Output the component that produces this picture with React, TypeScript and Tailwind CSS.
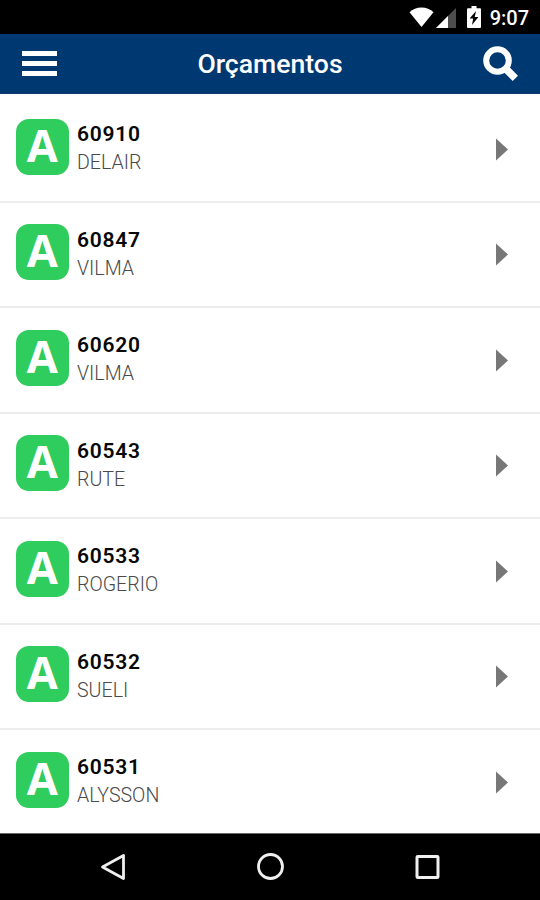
type Quote = {
  id: string;
  customer: string;
};

const quotes: Quote[] = [
  { id: "60910", customer: "DELAIR" },
  { id: "60847", customer: "VILMA" },
  { id: "60620", customer: "VILMA" },
  { id: "60543", customer: "RUTE" },
  { id: "60533", customer: "ROGERIO" },
  { id: "60532", customer: "SUELI" },
  { id: "60531", customer: "ALYSSON" },
];

function StatusBar() {
  return (
    <div className="flex h-[34px] shrink-0 items-start justify-end bg-black pr-[11px] text-white">
      <svg className="mt-[7px] h-5 w-[25px]" viewBox="0 0 25 20" fill="#fff">
        <path d="M0.5 5.2C3.6 2.1 7.9 0.4 12.5 0.4s8.9 1.7 12 4.8L12.5 20z" />
      </svg>
      <svg className="ml-[2px] mt-2 h-5 w-5" viewBox="0 0 20 20">
        <path d="M20 0v20H0z" fill="#4d4d4d" />
        <path d="M12 8v12H0z" fill="#fff" />
      </svg>
      <svg className="ml-[11px] mt-[6px] h-[22px] w-[14px]" viewBox="0 0 14 22">
        <path d="M4.5 0h5v2.2H13a1 1 0 0 1 1 1V21a1 1 0 0 1-1 1H1a1 1 0 0 1-1-1V3.2a1 1 0 0 1 1-1h3.5z" fill="#fff" />
        <path d="M9 5 2.6 12.6h3.6L5 19l6.4-8H7.7z" fill="#000" />
      </svg>
      <span className="ml-[9px] mt-1 font-['Roboto',sans-serif] text-[20px] font-medium leading-7">
        9:07
      </span>
    </div>
  );
}

function Header() {
  return (
    <header className="flex h-[60px] shrink-0 items-center justify-between border-b border-[#17366f] bg-[#003972] px-[22px] text-white">
      <button className="flex w-[35px] flex-col gap-[5px]" aria-label="Menu">
        <span className="h-[5px] w-full bg-white" />
        <span className="h-[5px] w-full bg-white" />
        <span className="h-[5px] w-full bg-white" />
      </button>
      <h1 className="font-['Roboto',sans-serif] text-[26.6px] font-medium leading-[30px]">
        Orçamentos
      </h1>
      <button aria-label="Buscar">
        <svg className="h-[35px] w-[35px]" viewBox="0 0 35 35" fill="none" stroke="#fff">
          <circle cx="14.5" cy="14.5" r="11.3" strokeWidth="6" />
          <path d="M22.5 22.5 32.3 32.3" strokeWidth="7.5" />
        </svg>
      </button>
    </header>
  );
}

function QuoteRow({ quote }: { quote: Quote }) {
  return (
    <li className="flex h-[105.5px] shrink-0 items-start border-b-2 border-[#ececec] pl-4 pr-8 pt-[21.5px]">
      <div className="flex h-14 w-[52.5px] justify-center rounded-[13px] bg-[#2fcc5e] font-['Open_Sans',sans-serif] text-[45px] font-bold leading-[52px] text-white">
        A
      </div>
      <div className="ml-[8.5px] flex-1 font-['Roboto',sans-serif]">
        <p className="mt-[1.5px] text-[21px] font-semibold leading-7 tracking-[0.75px] text-[#080808]">
          {quote.id}
        </p>
        <p className="text-[19.6px] font-light leading-[29px] text-[#4a4a4a]">{quote.customer}</p>
      </div>
      <svg className="mt-[19px] h-[23px] w-3" viewBox="0 0 12 23" fill="#777">
        <path d="M0 0.5 12 11.5 0 22.5z" />
      </svg>
    </li>
  );
}

function NavigationBar() {
  return (
    <nav className="flex h-[67px] shrink-0 items-center justify-between border-t border-[#666] bg-black pl-[100px] pr-[99px]">
      <svg className="h-7 w-7" viewBox="0 0 28 28" fill="none" stroke="#f0f0f0" strokeWidth="2.8">
        <path d="M23.5 2.5v23L2.5 14z" strokeLinejoin="round" />
      </svg>
      <svg className="h-7 w-7" viewBox="0 0 28 28" fill="none" stroke="#f0f0f0" strokeWidth="2.8">
        <circle cx="13.5" cy="13.5" r="12" />
      </svg>
      <svg className="h-7 w-7" viewBox="0 0 28 28" fill="none" stroke="#f0f0f0" strokeWidth="3">
        <rect x="4" y="3.5" width="21" height="21" rx="0.8" />
      </svg>
    </nav>
  );
}

export default function App() {
  return (
    <div className="flex h-[900px] w-[540px] flex-col overflow-hidden bg-white">
      <StatusBar />
      <Header />
      <ul className="flex min-h-0 flex-1 flex-col overflow-hidden pt-[3.2px]">
        {quotes.map((quote) => (
          <QuoteRow key={quote.id} quote={quote} />
        ))}
      </ul>
      <NavigationBar />
    </div>
  );
}
